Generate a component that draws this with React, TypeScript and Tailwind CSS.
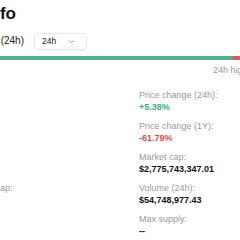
import React from "react";

const rightItems = [
  { label: "Price change (24h):", value: "+5.38%", cls: "text-[#3dae84]" },
  { label: "Price change (1Y):", value: "-61.79%", cls: "text-[#e5484d]" },
  { label: "Market cap:", value: "$2,775,743,347.01", cls: "text-[#111]" },
  { label: "Volume (24h):", value: "$54,748,977.43", cls: "text-[#111]" },
  { label: "Max supply:", value: "--", cls: "text-[#111]" },
];

const leftItems = [
  { label: "Market cap rank:", value: "#1" },
  { label: "All-time high:", value: "$126,080" },
  { label: "Circulating supply:", value: "19.94M" },
  { label: "Fully diluted market cap:", value: "$2.94B" },
  { label: "Total supply:", value: "19.94M" },
];

export default function App() {
  return (
    <div className="w-[240px] h-[240px] overflow-hidden bg-white font-['Liberation_Sans',Arial,sans-serif] text-[#111]">
      <div className="pt-[4px] flex">
        <div className="w-[16px] shrink-0 flex justify-end">
          <h1 className="whitespace-nowrap text-[17px] font-bold leading-[20px]">Price Info</h1>
        </div>
      </div>

      <div className="mt-[9px] flex items-center h-[16px]">
        <div className="w-[24px] shrink-0 flex justify-end">
          <span className="whitespace-nowrap text-[10px] leading-[12px] text-[#222]">Price change (24h)</span>
        </div>
        <div className="ml-[10px] w-[53px] h-[17px] shrink-0 border border-[#e6e6e6] rounded-[4px] flex items-center justify-between pl-[7px] pr-[12px] shadow-[0_1px_1px_rgba(0,0,0,0.04)]">
          <span className="text-[8.5px] leading-[10px] text-[#222]">24h</span>
          <svg width="5" height="3" viewBox="0 0 5 3" className="text-[#888]">
            <path d="M0.5 0.5 L2.5 2.5 L4.5 0.5" fill="none" stroke="currentColor" strokeWidth="0.8" />
          </svg>
        </div>
      </div>

      <div className="mt-[7px] h-[4px] flex">
        <div className="flex-1 bg-[#4fb48c]" />
        <div className="w-[7px] bg-[#e0565b]" />
      </div>

      <div className="mt-[5px] pl-[213px] whitespace-nowrap text-[9px] leading-[11px] text-[#999]">
        24h high: $115,200.00
      </div>

      <div className="mt-[13px] flex">
        <div className="w-[139px] shrink-0">
          <div className="-ml-[85px] flex flex-col gap-[7px] whitespace-nowrap">
            {leftItems.map((it) => (
              <div key={it.label} className="flex flex-col">
                <span className="text-[9px] leading-[12px] text-[#999]">{it.label}</span>
                <span className="text-[9px] leading-[12px] font-bold">{it.value}</span>
              </div>
            ))}
          </div>
        </div>
        <div className="flex flex-col gap-[7px] whitespace-nowrap">
          {rightItems.map((it) => (
            <div key={it.label} className="flex flex-col">
              <span className="text-[9px] leading-[12px] text-[#999]">{it.label}</span>
              <span className={`text-[9px] leading-[12px] font-bold ${it.cls}`}>{it.value}</span>
            </div>
          ))}
        </div>
      </div>
    </div>
  );
}
